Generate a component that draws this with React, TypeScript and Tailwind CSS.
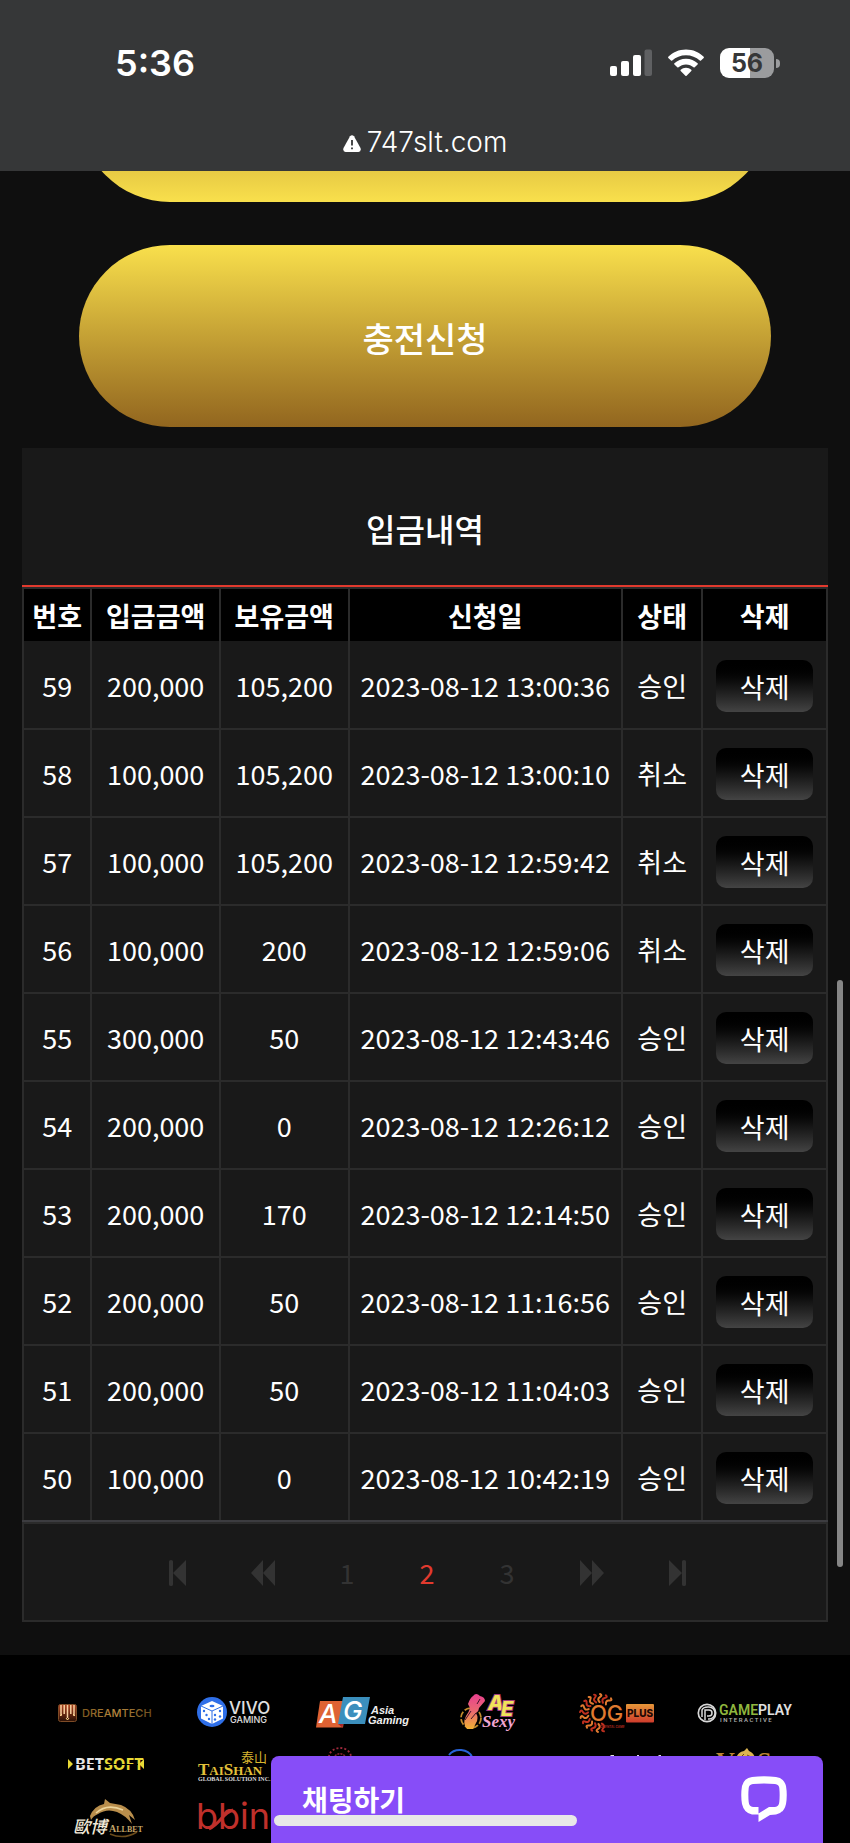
import type { ReactNode } from 'react';

type Deposit = {
    no: number;
    amount: string;
    balance: string;
    date: string;
    status: string;
};

const deposits: Deposit[] = [
    { no: 59, amount: '200,000', balance: '105,200', date: '2023-08-12 13:00:36', status: '승인' },
    { no: 58, amount: '100,000', balance: '105,200', date: '2023-08-12 13:00:10', status: '취소' },
    { no: 57, amount: '100,000', balance: '105,200', date: '2023-08-12 12:59:42', status: '취소' },
    { no: 56, amount: '100,000', balance: '200', date: '2023-08-12 12:59:06', status: '취소' },
    { no: 55, amount: '300,000', balance: '50', date: '2023-08-12 12:43:46', status: '승인' },
    { no: 54, amount: '200,000', balance: '0', date: '2023-08-12 12:26:12', status: '승인' },
    { no: 53, amount: '200,000', balance: '170', date: '2023-08-12 12:14:50', status: '승인' },
    { no: 52, amount: '200,000', balance: '50', date: '2023-08-12 11:16:56', status: '승인' },
    { no: 51, amount: '200,000', balance: '50', date: '2023-08-12 11:04:03', status: '승인' },
    { no: 50, amount: '100,000', balance: '0', date: '2023-08-12 10:42:19', status: '승인' },
];

const columns = [
    { label: '번호', width: 'w-[8.5%]' },
    { label: '입금금액', width: 'w-[16%]' },
    { label: '보유금액', width: 'w-[16%]' },
    { label: '신청일', width: 'w-[34%]' },
    { label: '상태', width: 'w-[10%]' },
    { label: '삭제', width: 'w-[15.5%]' },
];

function StatusBar() {
    return (
        <header className="bg-[#363738] pb-[13px] font-['Inter',sans-serif] text-white">
            <div className="flex h-[126px] items-center justify-between pr-[70px] pl-[115px]">
                <span className="text-[36px] leading-none font-semibold">5:36</span>
                <div className="flex items-center gap-4">
                    <svg width="42" height="28" viewBox="0 0 42 28" fill="#fff" aria-hidden="true">
                        <rect x="0" y="17" width="7" height="10" rx="2" />
                        <rect x="11" y="12" width="8" height="15" rx="2" />
                        <rect x="23" y="6" width="8" height="21" rx="2" />
                        <rect x="34.5" y="0.5" width="7.5" height="26.5" rx="2" fill="#5f6062" />
                    </svg>
                    <svg width="36" height="28" viewBox="0 0 36 28" fill="#fff" aria-hidden="true">
                        <path d="M18 0.5C25 0.5 31.200 3.300 35.700 7.700Q36.200 8.300 35.700 8.900L33 11.600Q32.400 12.100 31.800 11.600C28.200 8.200 23.300 6.200 18 6.200S7.800 8.200 4.200 11.600Q3.600 12.100 3 11.600L0.300 8.900Q-0.200 8.300 0.300 7.700C4.800 3.300 11 0.500 18 0.500Z" />
                        <path d="M18 9.700C22.600 9.700 26.600 11.500 29.600 14.300Q30.200 14.900 29.600 15.500L26.700 18.300Q26.100 18.900 25.500 18.300C23.500 16.500 21 15.400 18 15.400S12.500 16.500 10.500 18.300Q9.900 18.900 9.300 18.300L6.400 15.500Q5.800 14.900 6.400 14.300C9.400 11.500 13.400 9.700 18 9.700Z" />
                        <path d="M18 18.700C20 18.700 21.900 19.500 23.300 20.700Q23.900 21.300 23.300 21.900L18.600 26.800Q18 27.400 17.400 26.800L12.700 21.900Q12.100 21.300 12.700 20.700C14.100 19.500 16 18.700 18 18.700Z" />
                    </svg>
                    <div className="flex items-center gap-0.5">
                        <div className="flex h-[30px] w-[54px] items-center justify-center rounded-[9px] bg-linear-to-r from-white from-56% to-[#9b9c9e] to-56%">
                            <span className="text-[25px] leading-none font-bold text-[#363738]">56</span>
                        </div>
                        <span className="h-[9px] w-[4px] rounded-r-full bg-[#9b9c9e]" />
                    </div>
                </div>
            </div>
            <div className="flex h-8 items-center justify-center gap-1.5">
                <svg width="18" height="17" viewBox="0 0 18 17" aria-hidden="true" className="mt-0.5">
                    <path d="M7 1.300Q9-0.900 11 1.300L17.500 13Q18.500 16.500 15.500 17H2.500Q-0.500 16.500 0.500 13Z" fill="#fff" />
                    <path d="M9 5V10.500M9 12.400V14.200" stroke="#363738" strokeWidth="1.800" />
                </svg>
                <span className="text-[28px] leading-none font-light">747slt.com</span>
            </div>
        </header>
    );
}

function DepositTable() {
    return (
        <table className="w-full table-fixed border-collapse text-center text-[27px] leading-[30px] whitespace-nowrap">
            <colgroup>
                {columns.map((column) => (
                    <col key={column.label} className={column.width} />
                ))}
            </colgroup>
            <thead>
                <tr className="h-[53px]">
                    {columns.map((column) => (
                        <th key={column.label} scope="col" className="border-x-2 border-t-2 border-[#2b2b2b] bg-black p-0 pt-0.5 font-bold">
                            {column.label}
                        </th>
                    ))}
                </tr>
            </thead>
            <tbody className="[&_td]:border-x-2 [&_td]:border-b-2 [&_td]:border-[#2b2b2b] [&_td]:p-0 [&_td]:pt-0.5 [&_tr:last-child_td]:border-b-[#3c3c40]">
                {deposits.map((row) => (
                    <tr key={row.no} className="h-[88px]">
                        <td>{row.no}</td>
                        <td>{row.amount}</td>
                        <td>{row.balance}</td>
                        <td>{row.date}</td>
                        <td>{row.status}</td>
                        <td>
                            <button type="button" className="h-[52px] w-[97px] rounded-[10px] bg-linear-to-b from-black to-[#444] pt-0.5">
                                삭제
                            </button>
                        </td>
                    </tr>
                ))}
            </tbody>
        </table>
    );
}

function Pagination() {
    return (
        <nav aria-label="페이지" className="flex h-[100px] items-center justify-center gap-[65px] border-2 border-[#2b2b2b] pt-0.5 pl-1 text-[27px] text-[#333]">
            <button type="button" aria-label="처음">
                <svg width="17" height="26" viewBox="0 0 17 26" fill="currentColor">
                    <path d="M0 1.500Q0 0 2 0T4 1.500V24.500Q4 26 2 26T0 24.500ZM4 13L17 0V26Z" />
                </svg>
            </button>
            <button type="button" aria-label="이전">
                <svg width="24" height="26" viewBox="0 0 24 26" fill="currentColor">
                    <path d="M0 13L12 0V13L24 0V26L12 13V26Z" />
                </svg>
            </button>
            <a href="#1">1</a>
            <a href="#2" aria-current="page" className="text-[#e23a2e]">2</a>
            <a href="#3">3</a>
            <button type="button" aria-label="다음">
                <svg width="24" height="26" viewBox="0 0 24 26" fill="currentColor">
                    <path d="M24 13L12 0V13L0 0V26L12 13V26Z" />
                </svg>
            </button>
            <button type="button" aria-label="마지막">
                <svg width="17" height="26" viewBox="0 0 17 26" fill="currentColor">
                    <path d="M17 1.500Q17 0 15 0T13 1.500V24.500Q13 26 15 26T17 24.500ZM13 13L0 0V26Z" />
                </svg>
            </button>
        </nav>
    );
}

function Logo({ name, children }: { name: string; children: ReactNode }) {
    return (
        <svg viewBox="0 0 128 53" role="img" aria-label={name} className="h-[53px] w-full">
            {children}
        </svg>
    );
}

const rays = [75, 93, 111, 129, 147, 165, 183, 201, 219, 237, 255, 273, 291, 309];

function Providers() {
    return (
        <footer className="grid grid-cols-6 bg-black px-[41px] pt-[29px] font-['Inter',sans-serif]">
            <Logo name="Dreamtech">
                <defs>
                    <linearGradient id="gold" x1="0" x2="1" y1="0" y2="0">
                        <stop offset="0" stopColor="#80591f" />
                        <stop offset="0.5" stopColor="#b98a40" />
                        <stop offset="1" stopColor="#6e4e1e" />
                    </linearGradient>
                    <linearGradient id="bronze" x1="0" x2="0" y1="0" y2="1">
                        <stop offset="0" stopColor="#b0441f" />
                        <stop offset="1" stopColor="#2a1005" />
                    </linearGradient>
                </defs>
                <rect x="17.500" y="20.500" width="18" height="17" rx="2" fill="url(#bronze)" stroke="#7d4b26" />
                <path d="M20 21V32M23.200 21V30M26.500 21V34M29.800 21V30M33 21V32" stroke="#f7cfa0" strokeWidth="1.500" />
                <path d="M19 32L21 30M25 34L26.500 36L28 34M32 30L34 32" stroke="#ffd58a" fill="none" />
                <text x="41" y="33" fontSize="11" fontWeight="500" fill="url(#gold)">DREAMTECH</text>
            </Logo>
            <Logo name="Vivo Gaming">
                <circle cx="43" cy="28" r="15" fill="#2f6fe8" />
                <path d="M43 17L54 22V34.500L43 40L32 34.500V22Z" fill="#fff" />
                <path d="M32 22L43 27L54 22M43 27V40" stroke="#2f6fe8" fill="none" />
                <g fill="#2f6fe8">
                    <ellipse cx="43" cy="22" rx="2.500" ry="1.300" />
                    <circle cx="35" cy="27" r="1.200" />
                    <circle cx="37.500" cy="31" r="1.200" />
                    <circle cx="40" cy="35" r="1.200" />
                    <circle cx="46" cy="31" r="1.200" />
                    <circle cx="51" cy="27" r="1.200" />
                    <circle cx="46" cy="35.500" r="1.200" />
                    <circle cx="51" cy="32.500" r="1.200" />
                </g>
                <text fontWeight="500" fill="#e0e0e0">
                    <tspan x="60" y="30" fontSize="17">VIVO</tspan>
                    <tspan x="61" y="39" fontSize="9">GAMING</tspan>
                </text>
            </Logo>
            <Logo name="Asia Gaming">
                <path d="M23 17H50L46 43.500H19Z" fill="#de6233" />
                <path d="M46 13H73L68 40H41Z" fill="#3b8fbd" />
                <path d="M41 40H46L45.500 43.500Z" fill="#a5262b" />
                <text x="22" y="39" fontSize="26" fontStyle="italic" fontWeight="500" fill="#fff">A</text>
                <text x="46" y="36" fontSize="26" fontStyle="italic" fontWeight="500" fill="#fff">G</text>
                <text className="font-['Liberation_Sans',sans-serif]" fontSize="11" fontStyle="italic" fontWeight="700" fill="#eee">
                    <tspan x="74" y="30">Asia</tspan>
                    <tspan x="71" y="40">Gaming</tspan>
                </text>
            </Logo>
            <Logo name="AE Sexy">
                <defs>
                    <linearGradient id="dancer" x1="0" x2="0" y1="0" y2="1">
                        <stop offset="0" stopColor="#e8408f" />
                        <stop offset="0.500" stopColor="#ea6a70" />
                        <stop offset="1" stopColor="#f2b233" />
                    </linearGradient>
                </defs>
                <circle cx="46" cy="34" r="10" fill="none" stroke="#c08a2c" strokeWidth="1.800" strokeDasharray="6 2" />
                <path d="M48 12Q51 8 55 12Q60 13 60 17L54 24Q54 27 51 29Q54 34 51 39L48 45H42Q37 40 41 32Q44 28 45 24L43 20Q45 14 48 12Z" fill="url(#dancer)" />
                <path d="M46 27L40 36M51 29L46 35M55 15L52 20" stroke="#40122a" />
                <g fontStyle="italic" fontWeight="800" fill="#f0e35a" stroke="#a33a7c" strokeWidth="2" paintOrder="stroke">
                    <text x="63" y="26" fontSize="20">A</text>
                    <text x="76" y="32" fontSize="20">E</text>
                </g>
                <text x="57" y="43" fontSize="17" fontStyle="italic" fontWeight="700" fill="#f3a6d2" className="font-['Liberation_Serif',serif]">Sexy</text>
            </Logo>
            <Logo name="OG Plus">
                <defs>
                    <linearGradient id="plus" x1="0" x2="0" y1="0" y2="1">
                        <stop offset="0" stopColor="#e59638" />
                        <stop offset="1" stopColor="#cf3c2c" />
                    </linearGradient>
                </defs>
                <g fill="none" strokeWidth="2" strokeLinecap="round">
                    {rays.map((angle, i) => (
                        <path key={angle} d="M57 29Q60 26 62 29T65 29" transform={`rotate(${angle} 46 29)`} stroke={i % 2 ? '#df7a30' : '#c0301f'} />
                    ))}
                </g>
                <text x="37" y="37" fontSize="22" fontWeight="500" fill="#e07a2f" stroke="#000" strokeWidth="2" paintOrder="stroke">OG</text>
                <rect x="73" y="20" width="28" height="18.500" rx="1" fill="url(#plus)" />
                <text x="74" y="33" fontSize="10" fontWeight="800" fill="#200804">PLUS</text>
                <text x="47" y="44" fontSize="3" fontWeight="700" fill="#a3261c">ORIENTAL GAME</text>
            </Logo>
            <Logo name="Gameplay Interactive">
                <circle cx="26" cy="29" r="8.700" fill="none" stroke="#d8d8d8" strokeWidth="1.700" />
                <path d="M24 36V26H28A3 3 0 0 1 28 32H26M21 33V26Q22 23 27 23H28A6 6 0 0 1 28 35H27" stroke="#d8d8d8" strokeWidth="1.500" fill="none" />
                <text className="font-['Roboto',sans-serif]" fill="#e0e0e0">
                    <tspan x="38" y="31" fontSize="14" fontWeight="600" fill="#8fb63e">GAME</tspan>
                    <tspan fontSize="14" fontWeight="600">PLAY</tspan>
                    <tspan x="39" y="38" fontSize="6" fontWeight="500" fill="#b4b4b4">I N T E R A C T I V E</tspan>
                </text>
            </Logo>

            <Logo name="Betsoft">
                <path d="M27 22L32 27L27 32ZM103 22L98 27L103 32Z" fill="#e8d936" />
                <text x="34" y="33" fontSize="16" fontWeight="700" fill="#e6e6e6" className="font-['Open_Sans',sans-serif]">
                    BET<tspan fill="#e8d936">SOFT</tspan>
                </text>
                <path d="M33 27.500H97" stroke="#000" />
            </Logo>
            <Logo name="TaiShan">
                <text x="72" y="25" fontSize="13" fill="#d9b62f" className="font-['Noto_Sans_CJK_SC',sans-serif]">泰山</text>
                <text className="font-['Liberation_Serif',serif]" fontWeight="700" fill="#e3c03a">
                    <tspan x="29" y="38" fontSize="17">T</tspan>
                    <tspan fontSize="13">AI</tspan>
                    <tspan fontSize="17">S</tspan>
                    <tspan fontSize="13">HAN</tspan>
                    <tspan x="29" y="44" fontSize="6" fill="#ddd">GLOBAL SOLUTION INC.</tspan>
                </text>
            </Logo>
            <Logo name="Provider">
                <path d="M32 20A11 9 0 0 1 54 20" fill="none" stroke="#a02a3c" strokeWidth="1.800" strokeDasharray="2 2" />
                <path d="M38 19A6 5 0 0 1 48 19" fill="none" stroke="#8a2435" strokeWidth="1.500" strokeDasharray="2 1" />
            </Logo>
            <Logo name="Provider">
                <path d="M24 18A13 11 0 0 1 47 20" fill="none" stroke="#2763d8" strokeWidth="2" />
            </Logo>
            <Logo name="Provider">
                <path d="M56 20L58 18H61V20ZM84 18H86V20H84ZM104 20L106 18H108V20Z" fill="#ddd" />
            </Logo>
            <Logo name="VOS">
                <g className="font-['Liberation_Serif',serif]" fontSize="26" fontWeight="700" fill="#b98435">
                    <text x="35" y="33">V</text>
                    <text x="76" y="33">S</text>
                </g>
                <path d="M55 21Q57 15 63 14L66 11L68 14Q73 16 74 21Z" fill="#dcb450" />
                <path d="M60 20L63 17M66 18L70 20" stroke="#6b4a14" />
            </Logo>

            <Logo name="Allbet">
                <path d="M49 26Q53 16 63 14L64 9L69 13L80 15Q91 19 94 30L88 25L91 34Q84 25 76 22Q66 18 57 24Q52 26 50 30Z" fill="#b98e4c" />
                <path d="M55 23Q66 13 82 20" stroke="#edd59c" strokeWidth="1.500" fill="none" />
                <path d="M69 44Q83 50 96 42" stroke="#6b4c1c" strokeWidth="1.500" fill="none" />
                <text x="32" y="43" fontSize="17" fontStyle="italic" fontWeight="500" fill="#f2ead8" className="font-['Noto_Sans_CJK_TC',sans-serif]">歐博</text>
                <text x="68" y="42" fontSize="10" fontWeight="700" fill="#c3a468" className="font-['Liberation_Serif',serif]">
                    A<tspan fontSize="8">LLBET</tspan>
                </text>
            </Logo>
            <Logo name="bbin">
                <text x="27" y="39" fontSize="36" fill="#c0302b">bbin</text>
                <path d="M40 39Q46 36 52 29T64 20" stroke="#c0302b" strokeWidth="3" fill="none" />
            </Logo>
        </footer>
    );
}

function ChatWidget() {
    return (
        <button type="button" className="fixed right-[27px] bottom-0 flex h-[87px] w-[552px] items-center justify-between rounded-t-lg bg-[#874df8] pr-9 pb-0.5 pl-[31px] text-white">
            <span className="text-[28px] leading-none font-bold">채팅하기</span>
            <svg width="46" height="46" viewBox="0 0 46 46" aria-hidden="true">
                <path
                    fill="#fff"
                    fillRule="evenodd"
                    d="M11 1Q23 -0.500 35 1Q43 2 45 10Q46.500 19 45 28Q43 37 35 38.500L29 39L17.500 46V38.500H11Q3 37 1 28Q-0.500 19 1 10Q3 2 11 1ZM12 8Q8 8.500 7.700 12Q7 19 7.700 26Q8 30.500 12 31H17.500V37.500L28 31H34Q38 30.500 38.300 26Q39 19 38.300 12Q38 8.500 34 8Q23 7 12 8Z"
                />
            </svg>
        </button>
    );
}

export default function App() {
    return (
        <div className="bg-[#0f0f0f] font-['Noto_Sans_CJK_KR',sans-serif] text-white">
            <StatusBar />
            <main className="px-[22px] pb-[33px]">
                {/* previous action, scrolled under the browser bar */}
                <div className="flex h-[31px] items-end overflow-hidden px-[57px]">
                    <div className="h-[182px] w-full shrink-0 rounded-full bg-linear-to-t from-[#f9e04c] to-[#92661f]" />
                </div>
                <div className="px-[57px] pt-[43px] pb-[21px]">
                    <button type="button" className="h-[182px] w-full rounded-full bg-linear-to-b from-[#f9e04c] to-[#92661f] pt-0.5 text-[34px] font-medium">
                        충전신청
                    </button>
                </div>
                <section className="bg-[#191919]">
                    <h2 className="border-b-2 border-[#e23a2e] pt-[57px] pb-[34px] text-center text-[32px] leading-[46px] font-medium">입금내역</h2>
                    <DepositTable />
                    <Pagination />
                </section>
            </main>
            <Providers />
            <ChatWidget />
            <div className="fixed top-[980px] right-[7px] h-[587px] w-[6px] rounded-full bg-[#868686]" />
            <div className="fixed bottom-[17px] left-[274px] h-[11px] w-[303px] rounded-full bg-[#e8e8e8]" />
        </div>
    );
}
